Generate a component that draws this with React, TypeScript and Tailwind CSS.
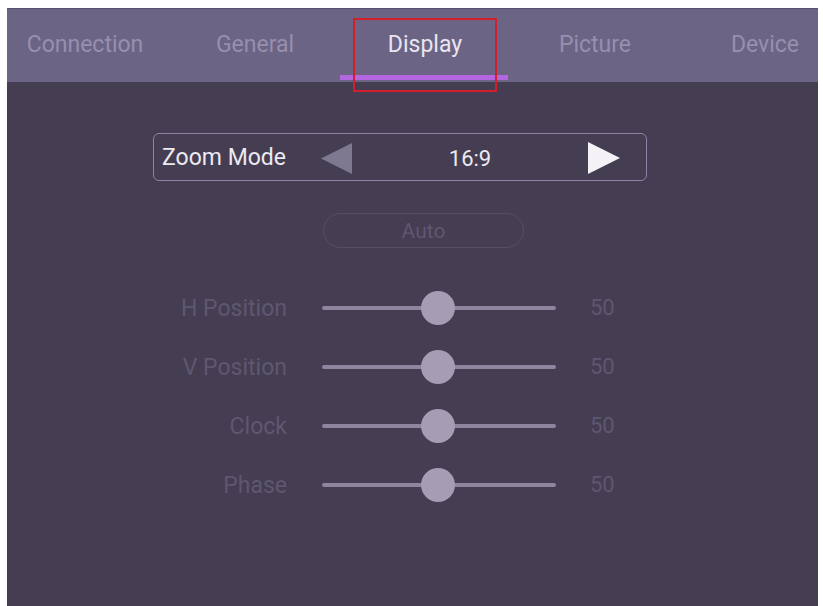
import React from "react";

const tabs = ["Connection", "General", "Display", "Picture", "Device"];
const sliders = ["H Position", "V Position", "Clock", "Phase"];

function Slider({ label }: { label: string }) {
  return (
    <div className="flex items-center h-[59px]">
      <div className="w-[140px] text-right text-[23px] text-[#5f5770] leading-none pt-[1px]">{label}</div>
      <div className="relative ml-[35px] w-[234px] h-[4px] rounded-full bg-[#8e869f]">
        <div className="absolute left-[99px] top-[-15px] w-[34px] h-[34px] rounded-full bg-[#a49db3]" />
      </div>
      <div className="ml-[34px] text-[22px] text-[#5f5770] leading-none pt-[1px]">50</div>
    </div>
  );
}

export default function App() {
  return (
    <div
      className="w-[823px] h-[606px] bg-white pt-[8px] pl-[7px] pr-[5px] overflow-hidden"
      style={{ fontFamily: "Roboto, 'Liberation Sans', sans-serif" }}
    >
      <div className="relative w-full h-full flex flex-col bg-[#453d51]">
        <div className="h-[74px] bg-[#6c6485] border-t border-[#5a5272] overflow-hidden">
          <div className="flex ml-[-7px] h-full">
            {tabs.map((t) => (
              <div key={t} className="relative w-[170px] shrink-0 flex items-center justify-center">
                <span className={t === "Display" ? "text-[23px] text-[#e9e5f0]" : "text-[23px] text-[#978fae]"}>{t}</span>
                {t === "Display" && (
                  <div className="absolute left-0 bottom-[2px] w-[168px] h-[5px] bg-[#b466e0]" />
                )}
              </div>
            ))}
          </div>
        </div>
        <div className="flex flex-col">
          <div className="ml-[146px] mt-[51px] w-[494px] h-[48px] rounded-[6px] border border-[#8b84a5] flex items-center pt-[2px]">
            <span className="ml-[8px] w-[160px] text-[23px] text-[#ece9f2]">Zoom Mode</span>
            <svg width="31" height="31" viewBox="0 0 31 31" className="ml-[-1px]">
              <polygon points="31,0 31,31 0,15.5" fill="#7e7891" />
            </svg>
            <span className="w-[236px] text-center text-[22px] text-[#ece9f2]">16:9</span>
            <svg width="32" height="32" viewBox="0 0 32 32">
              <polygon points="0,0 0,32 32,16" fill="#f4f2f7" />
            </svg>
          </div>
          <div className="ml-[316px] mt-[32px] w-[201px] h-[35px] rounded-full border border-[#564e63] flex items-center justify-center text-[21px] text-[#5f5770] pt-[2px]">
            Auto
          </div>
          <div className="ml-[140px] mt-[30px] flex flex-col">
            {sliders.map((s) => (
              <Slider key={s} label={s} />
            ))}
          </div>
        </div>
        <div className="absolute left-[346px] top-[10px] w-[144px] h-[74px] border-2 border-[#d41e2c]" />
      </div>
    </div>
  );
}
